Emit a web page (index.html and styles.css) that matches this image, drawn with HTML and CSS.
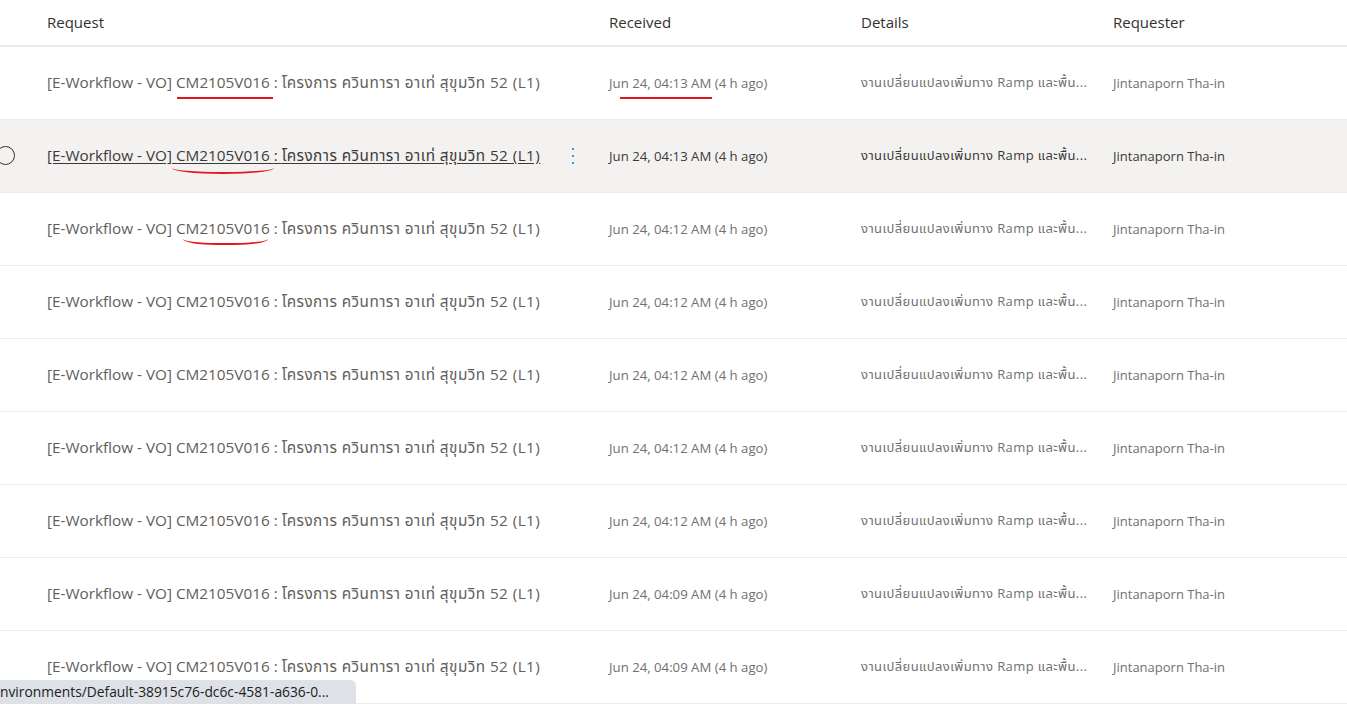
FILE: index.html
```html
<!DOCTYPE html>
<html lang="th">
<head>
<meta charset="utf-8">
<title>Requests</title>
<link rel="stylesheet" href="styles.css">
</head>
<body>
<div class="table">
  <div class="row head">
    <div class="cell">Request</div>
    <div class="cell">Received</div>
    <div class="cell">Details</div>
    <div class="cell">Requester</div>
  </div>

  <div class="row">
    <div class="cell req">[E-Workflow - VO] <span class="mark m1">CM2105V016</span> : <span class="th">โครงการ ควินทารา อาเท่ สุขุมวิท 52 (L1)</span></div>
    <div class="cell rec"><span class="mark m4">Jun 24, 04:13 AM</span> (4 h ago)</div>
    <div class="cell det">งานเปลี่ยนแปลงเพิ่มทาง Ramp และพื้น...</div>
    <div class="cell who">Jintanaporn Tha-in</div>
  </div>

  <div class="row hover">
    <span class="radio"></span>
    <div class="cell req"><span class="link">[E-Workflow - VO]<span class="mark m2"> CM2105V016 </span>: <span class="th">โครงการ ควินทารา อาเท่ สุขุมวิท 52 (L1)</span></span>
      <span class="more"><i></i><i></i><i></i></span>
    </div>
    <div class="cell rec">Jun 24, 04:13 AM (4 h ago)</div>
    <div class="cell det">งานเปลี่ยนแปลงเพิ่มทาง Ramp และพื้น...</div>
    <div class="cell who">Jintanaporn Tha-in</div>
  </div>

  <div class="row">
    <div class="cell req">[E-Workflow - VO] <span class="mark m3">CM2105V016</span> : <span class="th">โครงการ ควินทารา อาเท่ สุขุมวิท 52 (L1)</span></div>
    <div class="cell rec">Jun 24, 04:12 AM (4 h ago)</div>
    <div class="cell det">งานเปลี่ยนแปลงเพิ่มทาง Ramp และพื้น...</div>
    <div class="cell who">Jintanaporn Tha-in</div>
  </div>

  <div class="row">
    <div class="cell req">[E-Workflow - VO] CM2105V016 : <span class="th">โครงการ ควินทารา อาเท่ สุขุมวิท 52 (L1)</span></div>
    <div class="cell rec">Jun 24, 04:12 AM (4 h ago)</div>
    <div class="cell det">งานเปลี่ยนแปลงเพิ่มทาง Ramp และพื้น...</div>
    <div class="cell who">Jintanaporn Tha-in</div>
  </div>

  <div class="row">
    <div class="cell req">[E-Workflow - VO] CM2105V016 : <span class="th">โครงการ ควินทารา อาเท่ สุขุมวิท 52 (L1)</span></div>
    <div class="cell rec">Jun 24, 04:12 AM (4 h ago)</div>
    <div class="cell det">งานเปลี่ยนแปลงเพิ่มทาง Ramp และพื้น...</div>
    <div class="cell who">Jintanaporn Tha-in</div>
  </div>

  <div class="row">
    <div class="cell req">[E-Workflow - VO] CM2105V016 : <span class="th">โครงการ ควินทารา อาเท่ สุขุมวิท 52 (L1)</span></div>
    <div class="cell rec">Jun 24, 04:12 AM (4 h ago)</div>
    <div class="cell det">งานเปลี่ยนแปลงเพิ่มทาง Ramp และพื้น...</div>
    <div class="cell who">Jintanaporn Tha-in</div>
  </div>

  <div class="row">
    <div class="cell req">[E-Workflow - VO] CM2105V016 : <span class="th">โครงการ ควินทารา อาเท่ สุขุมวิท 52 (L1)</span></div>
    <div class="cell rec">Jun 24, 04:12 AM (4 h ago)</div>
    <div class="cell det">งานเปลี่ยนแปลงเพิ่มทาง Ramp และพื้น...</div>
    <div class="cell who">Jintanaporn Tha-in</div>
  </div>

  <div class="row">
    <div class="cell req">[E-Workflow - VO] CM2105V016 : <span class="th">โครงการ ควินทารา อาเท่ สุขุมวิท 52 (L1)</span></div>
    <div class="cell rec">Jun 24, 04:09 AM (4 h ago)</div>
    <div class="cell det">งานเปลี่ยนแปลงเพิ่มทาง Ramp และพื้น...</div>
    <div class="cell who">Jintanaporn Tha-in</div>
  </div>

  <div class="row">
    <div class="cell req">[E-Workflow - VO] CM2105V016 : <span class="th">โครงการ ควินทารา อาเท่ สุขุมวิท 52 (L1)</span></div>
    <div class="cell rec">Jun 24, 04:09 AM (4 h ago)</div>
    <div class="cell det">งานเปลี่ยนแปลงเพิ่มทาง Ramp และพื้น...</div>
    <div class="cell who">Jintanaporn Tha-in</div>
  </div>
</div>

<div class="status">nvironments/Default-38915c76-dc6c-4581-a636-0...</div>
</body>
</html>
```

FILE: styles.css
```css
html, body {
  margin: 0;
  padding: 0;
  background: #ffffff;
  overflow: hidden;
}

body {
  font-family: "Open Sans", "Noto Sans", "Noto Sans Thai", "Loma", "DejaVu Sans", sans-serif;
  color: #605e5c;
}

.table {
  width: 1347px;
}

.row {
  position: relative;
  display: grid;
  grid-template-columns: 562px 252px 252px 1fr;
  padding-left: 47px;
  height: 72px;
  align-items: center;
  border-bottom: 1px solid #edebe9;
}

.row.head {
  height: 45px;
  border-bottom: 2px solid #edebe9;
  padding-bottom: 2px;
  box-sizing: border-box;
  height: 47px;
  font-size: 15px;
  color: #323130;
}

.cell {
  white-space: nowrap;
}

.req {
  font-size: 15.3px;
  color: #605e5c;
  position: relative;
}

.th {
  letter-spacing: 0.45px;
}

.rec {
  font-size: 13.2px;
  color: #727070;
}

.det {
  font-size: 13px;
  letter-spacing: 0.4px;
  color: #727070;
}

.who {
  font-size: 13px;
  color: #727070;
}

.row.hover {
  background: #f3f2f1;
}

.row.hover .req,
.row.hover .rec,
.row.hover .det,
.row.hover .who {
  color: #3b3a39;
}

.link {
  text-decoration: underline;
  text-underline-offset: 2px;
}

.radio {
  position: absolute;
  left: -4px;
  top: 26px;
  width: 19px;
  height: 19px;
  border: 1px solid #323130;
  border-radius: 50%;
  box-sizing: border-box;
}

.more {
  position: absolute;
  left: 525px;
  top: 50%;
  transform: translateY(-50%);
  display: flex;
  flex-direction: column;
  gap: 5px;
}

.more i {
  display: block;
  width: 2px;
  height: 2px;
  border-radius: 50%;
  background: #0078d4;
}

.mark {
  position: relative;
}

.mark::after {
  content: "";
  position: absolute;
  border-bottom: 2px solid #e8141b;
}

.m1::after {
  left: 1px;
  right: -3px;
  bottom: -7px;
}

.m2::after {
  left: 0;
  right: 0;
  bottom: -9px;
  height: 4px;
  border-radius: 0 0 50% 50% / 0 0 100% 100%;
}

.m3::after {
  left: 7px;
  right: 2px;
  bottom: -7px;
  height: 4px;
  border-radius: 0 0 40% 40% / 0 0 100% 100%;
}

.m4::after {
  left: 11px;
  right: -1px;
  bottom: -7px;
}

.status {
  position: fixed;
  left: 0;
  bottom: 4px;
  height: 24px;
  width: 343px;
  padding-right: 13px;
  background: #dee1e6;
  border-top-right-radius: 6px;
  font-family: "Open Sans", "Noto Sans", sans-serif;
  font-size: 13.8px;
  color: #202124;
  line-height: 24px;
  white-space: nowrap;
  overflow: hidden;
}
```
